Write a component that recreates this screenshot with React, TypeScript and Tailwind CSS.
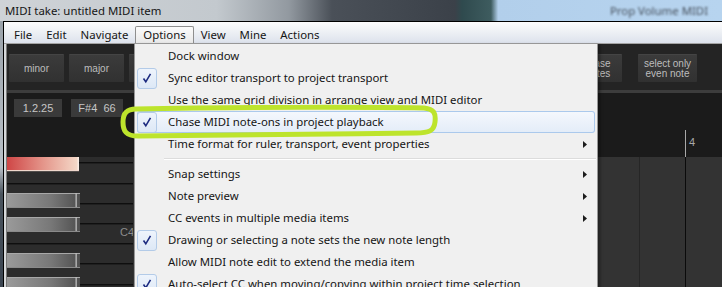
import clsx from "clsx";

type Item = {
  label?: string;
  checked?: boolean;
  active?: boolean;
  sub?: boolean;
  sep?: boolean;
};

const menuItems: Item[] = [
  { label: "Dock window" },
  { label: "Sync editor transport to project transport", checked: true },
  { label: "Use the same grid division in arrange view and MIDI editor" },
  { label: "Chase MIDI note-ons in project playback", checked: true, active: true },
  { label: "Time format for ruler, transport, event properties", sub: true },
  { sep: true },
  { label: "Snap settings", sub: true },
  { label: "Note preview", sub: true },
  { label: "CC events in multiple media items", sub: true },
  { label: "Drawing or selecting a note sets the new note length", checked: true },
  { label: "Allow MIDI note edit to extend the media item" },
  {
    label: "Auto-select CC when moving/copying within project time selection",
    checked: true,
  },
];

const menubar = ["File", "Edit", "Navigate", "Options", "View", "Mine", "Actions"];

const CheckBox = () => (
  <div className="flex h-[21px] w-[20px] items-center justify-center rounded-[3px] border border-[#b3cbe8] bg-[linear-gradient(#eef4fc,#dde8f6)]">
    <svg width="12" height="12" viewBox="0 0 12 12">
      <path d="M2.5 6.5 L4.8 9.8 L9.5 1.8" fill="none" stroke="#1d2b80" strokeWidth="1.6" />
    </svg>
  </div>
);

const Btn = ({ lines, className }: { lines: string[]; className?: string }) => (
  <div
    className={clsx(
      "flex h-[28px] flex-col items-center justify-center rounded-[1px] border-t border-[#444] bg-[linear-gradient(#3b3b3b,#313131)] text-[10px] leading-[10px] text-[#bdbdbd]",
      className
    )}
  >
    {lines.map((l) => (
      <span key={l} className="whitespace-nowrap">
        {l}
      </span>
    ))}
  </div>
);

const Piano = () => {
  const lines = [5, 26, 46, 66, 86, 106, 127];
  const blacks = [36, 60, 96, 120];
  return (
    <svg width="126" height="130" viewBox="0 0 126 130" className="shrink-0">
      <defs>
        <linearGradient id="bk" x1="0" x2="1">
          <stop offset="0" stopColor="#9a9a9a" />
          <stop offset="0.6" stopColor="#787878" />
          <stop offset="1" stopColor="#4e4e4e" />
        </linearGradient>
        <linearGradient id="rk" x1="0" x2="1">
          <stop offset="0" stopColor="#cf4646" />
          <stop offset="0.5" stopColor="#e4958a" />
          <stop offset="1" stopColor="#f5dccb" />
        </linearGradient>
      </defs>
      <rect width="126" height="130" fill="#2c2c2c" />
      {lines.map((y) => (
        <rect key={y} x="0" y={y} width="126" height="1.4" fill="#0e0e0e" />
      ))}
      <rect x="0" y="0" width="72" height="14" fill="url(#rk)" />
      <rect x="70.5" y="0" width="1.5" height="14" fill="#f8ece4" />
      <rect x="0" y="13" width="72" height="1.2" fill="#f0d8cc" />
      {blacks.map((y) => (
        <g key={y}>
          <rect x="0" y={y} width="73" height="15" fill="url(#bk)" />
          <rect x="0" y={y} width="73" height="1" fill="#a8a8a8" />
          <rect x="68.5" y={y} width="1.3" height="15" fill="#bdbdbd" />
          <rect x="0" y={y + 14} width="73" height="1" fill="#8a8a8a" />
        </g>
      ))}
      <text
        x="113"
        y="79"
        fontSize="11"
        fill="#8c8c8c"
        fontFamily="'Liberation Sans', Arial, sans-serif"
      >
        C4
      </text>
    </svg>
  );
};

export default function App() {
  return (
    <div className="relative h-[287px] w-[722px] overflow-hidden bg-[#1b1b1b] font-['Noto_Sans',sans-serif] text-[11.4px] text-[#151515]">
      {/* title bar */}
      <div className="flex h-[21px] items-center bg-[linear-gradient(to_right,#cfd3d7_0%,#c3c9ce_30%,#9299a0_40%,#4a5058_46%,#3b4149_63%,#2f4a4e_64%,#3e5c5f_68%,#b2cfeb_69%,#b7d4ef_100%)] pl-[5px]">
        <span className="whitespace-nowrap">MIDI take: untitled MIDI item</span>
        <span className="ml-auto mr-[14px] whitespace-nowrap text-[#46505c] blur-[1.3px]">
          Prop Volume MIDI
        </span>
      </div>

      <div className="flex h-[266px]">
        <div className="w-[3px] bg-[linear-gradient(#9aa2aa,#b9c0c7_55%,#4a545e_65%,#3a4450)]" />
        <div className="flex flex-1 flex-col border-l border-t border-black">
          {/* menu bar */}
          <div className="flex h-[22px] items-end border-b border-[#a3a3a3] bg-[linear-gradient(#fcfcfd,#eef1f5_45%,#dde2ec)] pl-[3px]">
            {menubar.map((m) => (
              <div
                key={m}
                className={clsx(
                  "flex h-[17px] items-center px-[7px] leading-none",
                  m === "Options" &&
                    "rounded-t-[2px] border border-b-0 border-[#8e8e8e] bg-[linear-gradient(#fbfbfb,#e9e9e9)] px-[6px]"
                )}
              >
                {m}
              </div>
            ))}
          </div>

          <div className="flex flex-1">
            <div className="w-[3px] border-r border-[#7a7a7a] bg-[#d6d8da]" />
            <div className="flex flex-1 flex-col font-['Liberation_Sans',Arial,sans-serif]">
              {/* toolbar */}
              <div className="flex h-[46px] items-start gap-[5px] bg-[#242424] pl-[2px] pt-[10px]">
                <Btn lines={["minor"]} className="w-[55px]" />
                <Btn lines={["major"]} className="w-[55px]" />
                <Btn lines={["scale"]} className="w-[55px]" />
                <Btn lines={["erase", "notes"]} className="ml-auto w-[48px]" />
                <Btn lines={["select only", "even note"]} className="ml-[11px] mr-[25px] w-[59px]" />
              </div>
              <div className="h-[3px] bg-[#3d3d3d]" />

              {/* info + ruler */}
              <div className="relative flex h-[64px] items-start gap-[9px] bg-[#1b1b1b] pl-[7px] pt-[6px]">
                <div className="flex h-[18px] w-[48px] items-center justify-center bg-[#3a3a3a] text-[11px] text-[#c6c6c6]">
                  1.2.25
                </div>
                <div className="flex h-[18px] w-[52px] items-center justify-center whitespace-pre bg-[#3a3a3a] text-[11px] text-[#c6c6c6]">
                  F#4  66
                </div>
                <div className="absolute left-[678px] top-[37px] h-[27px] w-px bg-[#a9a9a9]" />
                <span className="absolute left-[682px] top-[41px] text-[11px] text-[#a9a9a9]">4</span>
              </div>

              {/* keys + grid */}
              <div className="flex flex-1">
                <Piano />
                <div className="relative flex-1 bg-[#333333]">
                  <div className="absolute left-[506px] top-0 h-full w-px bg-[#262626]" />
                  <div className="absolute left-[552px] top-0 h-full w-px bg-[#0b0b0b]" />
                </div>
              </div>
            </div>
          </div>
        </div>
      </div>

      {/* Options dropdown */}
      <div className="absolute left-[134px] top-[43px] h-[250px] w-[464px] border border-[#979797] bg-[#f0f0f0] pt-px shadow-[2px_2px_3px_rgba(0,0,0,0.4)]">
        {menuItems.map((it, i) =>
          it.sep ? (
            <div key={i} className="flex h-[8px] items-center">
              <div className="ml-[29px] mr-px h-[2px] flex-1 border-b border-t border-b-white border-t-[#dcdcdc]" />
            </div>
          ) : (
            <div
              key={i}
              className={clsx(
                "mx-[2px] flex h-[22px] items-center rounded-[3px]",
                it.active &&
                  "bg-[linear-gradient(#f5f8fd,#e3ecf8)] shadow-[inset_0_0_0_1px_#abc9ec]"
              )}
            >
              <div className="flex w-[31px] shrink-0 items-center">{it.checked && <CheckBox />}</div>
              <span className="flex-1 whitespace-nowrap">{it.label}</span>
              {it.sub && (
                <svg width="4" height="7" viewBox="0 0 4 7" className="mr-[8px] shrink-0">
                  <path d="M0 0 L4 3.5 L0 7 Z" fill="#1c1c1c" />
                </svg>
              )}
            </div>
          )
        )}
      </div>

      {/* hand-drawn highlight */}
      <svg
        width="326"
        height="40"
        viewBox="0 0 326 40"
        className="pointer-events-none absolute left-[116px] top-[103px]"
      >
        <path
          d="M20 6 C120 4 250 4 308 5 C318 6 320 10 319 19 C318 28 313 30 300 30 C200 31 90 33 22 33 C10 33 7 28 7 19 C7 11 10 6 20 6 Z"
          fill="none"
          stroke="#bde42c"
          strokeWidth="5"
          strokeLinejoin="round"
        />
      </svg>
    </div>
  );
}
